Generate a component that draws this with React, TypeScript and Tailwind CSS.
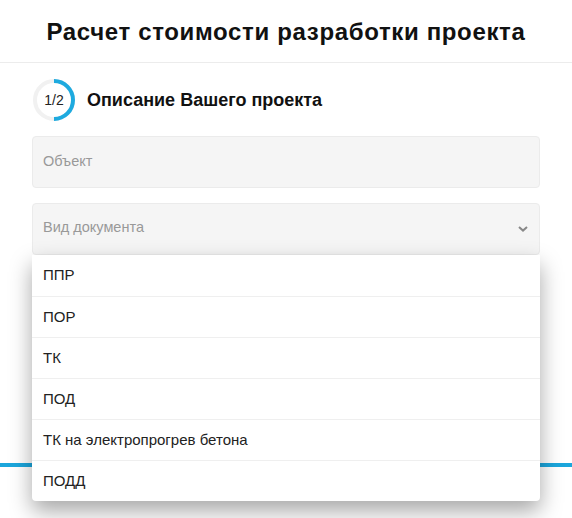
const options = ['ППР', 'ПОР', 'ТК', 'ПОД', 'ТК на электропрогрев бетона', 'ПОДД'];

function StepRing() {
  return (
    <div className="relative w-[44px] h-[44px] shrink-0">
      <svg width="44" height="44" viewBox="0 0 44 44" className="absolute inset-0">
        <circle cx="22" cy="22" r="19" fill="none" stroke="#f1f1f1" strokeWidth="4" />
        <path d="M22 3 A19 19 0 0 1 22 41" fill="none" stroke="#1eaadf" strokeWidth="4" />
      </svg>
      <span className="absolute inset-0 flex items-center justify-center text-[14px] text-[#222]">1/2</span>
    </div>
  );
}

export default function App() {
  return (
    <div className="w-[572px] h-[518px] overflow-hidden bg-white font-['Liberation_Sans',Arial,sans-serif]">
      <h1 className="h-[62px] pt-[17px] text-center text-[24px] font-bold tracking-[0.65px] text-[#111] leading-[30px]">
        Расчет стоимости разработки проекта
      </h1>
      <div className="h-px bg-[#ececec]" />

      <div className="px-[32px]">
        <div className="flex items-center gap-[11px] pt-[15px]">
          <StepRing />
          <span className="text-[18px] font-bold text-[#111]">Описание Вашего проекта</span>
        </div>

        <div className="mt-[14px] h-[52px] w-[508px] rounded-[4px] border border-[#ebebeb] bg-[#f5f5f5] flex items-center px-[10px] text-[14.5px] text-[#999]">
          Объект
        </div>

        <div className="relative mt-[15px] w-[508px]">
          <div className="h-[52px] rounded-[4px] border border-[#ebebeb] bg-[#f5f5f5] flex items-center justify-between pl-[10px] pr-[11px] text-[14.5px] text-[#999]">
            <span className="-mt-[2px]">Вид документа</span>
            <svg width="10" height="6" viewBox="0 0 10 6">
              <path d="M1 1 L5 4.6 L9 1" fill="none" stroke="#888" strokeWidth="2" />
            </svg>
          </div>

          <ul className="absolute left-0 top-[52px] z-10 w-[508px] rounded-b-[4px] bg-white shadow-[0_10px_22px_rgba(0,0,0,0.35)]">
            {options.map((o, i) => (
              <li
                key={o}
                className={`h-[41px] flex items-center px-[11px] text-[15px] text-[#222] ${
                  i > 0 ? 'border-t border-[#efefef]' : ''
                }`}
              >
                {o}
              </li>
            ))}
          </ul>
        </div>
      </div>

      <div className="mt-[208px] h-[4px] bg-[#1ba6dc]" />
    </div>
  );
}
